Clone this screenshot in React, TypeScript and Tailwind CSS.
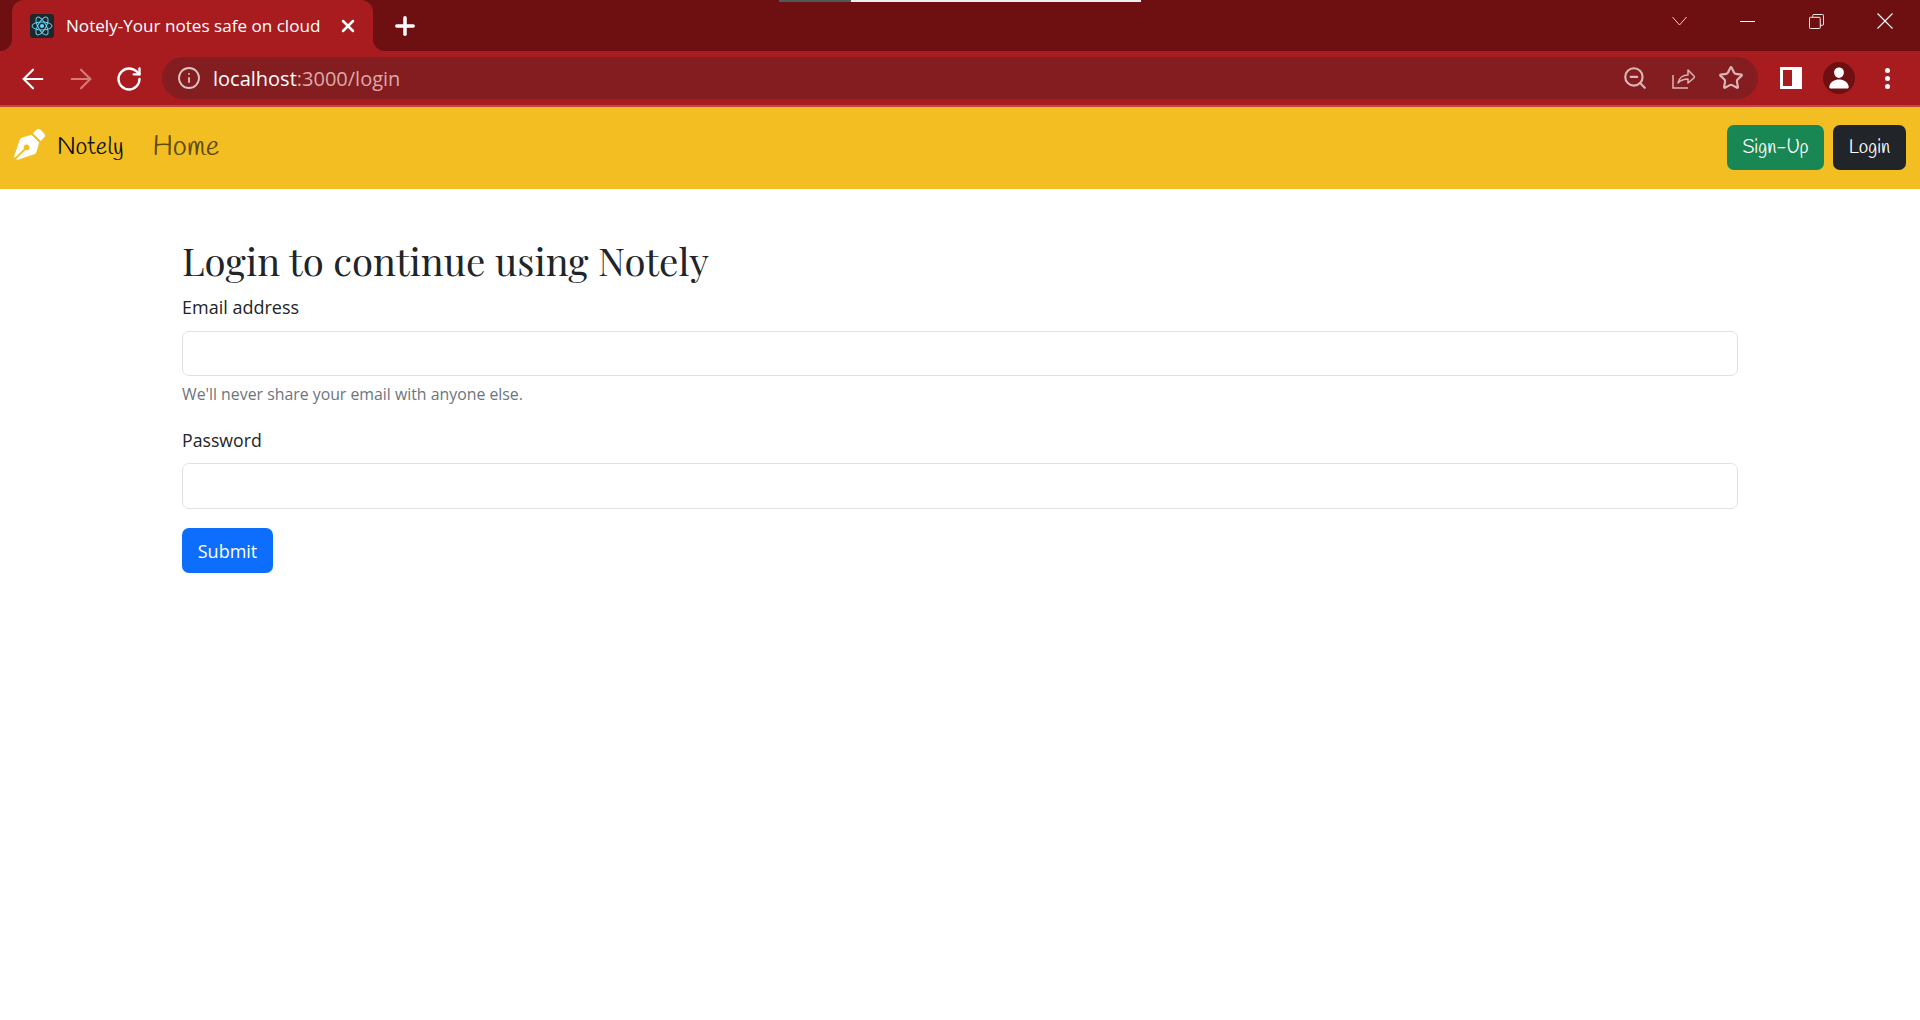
import React from "react";
import { ArrowLeft, ArrowRight, Info, Plus, RotateCw, Star, X, ZoomOut } from "lucide-react";
import { FaPenNib } from "react-icons/fa";
import { IoPerson } from "react-icons/io5";

const ReactIcon = () => (
  <svg viewBox="0 0 24 24" className="w-6 h-6 rounded-[3px] bg-[#20262c]">
    <g fill="none" stroke="#61dafb" strokeWidth="1">
      <ellipse cx="12" cy="12" rx="10" ry="4" />
      <ellipse cx="12" cy="12" rx="10" ry="4" transform="rotate(60 12 12)" />
      <ellipse cx="12" cy="12" rx="10" ry="4" transform="rotate(120 12 12)" />
    </g>
    <circle cx="12" cy="12" r="2" fill="#61dafb" />
  </svg>
);

const ShareIcon = () => (
  <svg viewBox="0 0 24 24" className="w-6 h-6" fill="none" stroke="#dcb5b5" strokeWidth="1.5">
    <path d="M2 9v13h15" />
    <path d="M7 17c1-5 5-8 10-8V4l7 7-7 6v-4c-4 0-7 1-10 4z" strokeLinejoin="round" />
  </svg>
);

const PanelIcon = () => (
  <div className="w-[22px] h-[22px] bg-white flex p-[3px] pr-[10px]">
    <div className="w-full h-full bg-[#a81c20]" />
  </div>
);

const ChevronIcon = () => (
  <svg viewBox="0 0 15 15" className="w-[15px] h-[15px]" fill="none" stroke="#eccccc" strokeWidth="1">
    <path d="M0.500 3l7 8 7-8" />
  </svg>
);

const RestoreIcon = () => (
  <svg viewBox="0 0 16 16" className="w-[15px] h-[15px]" fill="none" stroke="white" strokeWidth="1">
    <rect x="0.5" y="3.5" width="11.500" height="12" rx="1" />
    <path d="M4 3V1.500a1 1 0 0 1 1-1h9.500a1 1 0 0 1 1 1V11a1 1 0 0 1-1 1H12" />
  </svg>
);

const CloseIcon = () => (
  <svg viewBox="0 0 16 16" className="w-4 h-4" fill="none" stroke="white" strokeWidth="1.100">
    <path d="M0.500 0.500l15 15M15.500 0.500l-15 15" />
  </svg>
);

const TabBar = () => (
  <div className="h-[51px] bg-[#6e1012] flex pl-3 relative">
    {/* capture bar at top of the screen */}
    <div className="absolute top-0 left-[779px] h-[2px] w-[72px] bg-[#4f5a5f]" />
    <div className="absolute top-0 left-[851px] h-[2px] w-[290px] bg-[#eeeeee]" />

    <div className="relative w-[361px] h-full bg-[#a81c20] rounded-t-xl flex items-center pl-[18px]">
      <span className="absolute bottom-0 -left-3 w-3 h-3 bg-[#a81c20]">
        <span className="block w-full h-full bg-[#6e1012] rounded-br-xl" />
      </span>
      <span className="absolute bottom-0 -right-3 w-3 h-3 bg-[#a81c20]">
        <span className="block w-full h-full bg-[#6e1012] rounded-bl-xl" />
      </span>
      <ReactIcon />
      <span className="ml-3 text-[17.100px] text-white whitespace-nowrap">Notely-Your notes safe on cloud</span>
      <X className="absolute right-[15px] top-[16px] w-5 h-5 text-white" strokeWidth={3} />
    </div>
    <Plus className="ml-[18px] mt-[12px] w-7 h-7 text-white" strokeWidth={3} />

    <div className="ml-auto flex items-center h-[42px] pr-[27px]">
      <ChevronIcon />
      <div className="ml-[53px] w-[15px] h-px bg-white" />
      <div className="ml-[54px]"><RestoreIcon /></div>
      <div className="ml-[53px]"><CloseIcon /></div>
    </div>
  </div>
);

const ToolBar = () => (
  <div className="h-[56px] bg-[#a81c20] border-b-2 border-[#c9433f] flex items-center pl-[17px]">
    <ArrowLeft className="w-8 h-8 text-white mt-[2px]" strokeWidth={1.6} />
    <ArrowRight className="w-8 h-8 ml-4 mt-[2px] text-[#d77a78]" strokeWidth={1.6} />
    <RotateCw className="w-7 h-7 ml-[18px] mt-[2px] text-white" strokeWidth={2} />
    <div className="ml-[19px] w-[1596px] h-[42px] rounded-full bg-[#841d20] flex items-center pl-[15px] pr-[14px]">
      <Info className="w-6 h-6 text-[#dcc4c4]" strokeWidth={1.8} />
      <span className="ml-[12px] mt-[2px] text-[20px] text-white">
        localhost<span className="text-[#dca9a9]">:3000/login</span>
      </span>
      <div className="ml-auto flex items-center gap-[23px]">
        <ZoomOut className="w-[26px] h-[26px] text-[#dcb5b5]" strokeWidth={2} />
        <ShareIcon />
        <Star className="w-[26px] h-[26px] text-[#dcb5b5]" strokeWidth={2} />
      </div>
    </div>
    <div className="ml-[22px]"><PanelIcon /></div>
    <div className="ml-[21px] w-8 h-8 rounded-full bg-[#6e1012] flex items-center justify-center">
      <IoPerson className="w-6 h-6 text-white" />
    </div>
    <div className="ml-[30px] flex flex-col gap-[3px]">
      <span className="w-[5px] h-[5px] rounded-full bg-white" />
      <span className="w-[5px] h-[5px] rounded-full bg-white" />
      <span className="w-[5px] h-[5px] rounded-full bg-white" />
    </div>
  </div>
);

const Navbar = () => (
  <nav className="h-[82px] bg-[#f3be22] flex items-center pl-[14px] pr-[14px] font-['Handlee',cursive]">
    <FaPenNib className="w-[31px] h-[31px] -mt-[7px] text-white" />
    <span className="ml-[12px] text-[24px] text-[#111]">Notely</span>
    <span className="ml-[29px] -mt-[2px] text-[28.500px] text-[#5f4b0d]">Home</span>
    <div className="ml-auto flex gap-[9px] -mt-[2px]">
      <button className="w-[97px] h-[45px] pt-[2px] rounded-[7px] bg-[#198754] text-white text-[19.200px]">Sign-Up</button>
      <button className="w-[73px] h-[45px] pt-[2px] rounded-[7px] bg-[#212529] text-white text-[19.200px]">Login</button>
    </div>
  </nav>
);

const LoginForm = () => (
  <main className="w-[1556px] ml-[182px] pt-[47px] text-[#212529]">
    <h1 className="text-[38.400px] leading-[48px] font-['Playfair_Display','Liberation_Serif',serif]">Login to continue using Notely</h1>
    <label className="block mt-[11px] mb-[12px] text-[18px] leading-[24px]">Email address</label>
    <input className="block w-full h-[45px] bg-white border border-[#dee2e6] rounded-[7px]" />
    <p className="mt-[9px] text-[15.850px] leading-[18px] text-[#6c757d]">We'll never share your email with anyone else.</p>
    <label className="block mt-[25px] mb-[11px] text-[17.700px] leading-[24px]">Password</label>
    <input type="password" className="block w-full h-[46px] bg-white border border-[#dee2e6] rounded-[7px]" />
    <button className="mt-[19px] w-[91px] h-[45px] pt-[2px] rounded-[7px] bg-[#0d6efd] text-white text-[18px]">Submit</button>
  </main>
);

export default function App() {
  return (
    <div className="w-[1920px] h-[1020px] bg-white overflow-hidden font-['Open_Sans',sans-serif]">
      <TabBar />
      <ToolBar />
      <Navbar />
      <LoginForm />
    </div>
  );
}
